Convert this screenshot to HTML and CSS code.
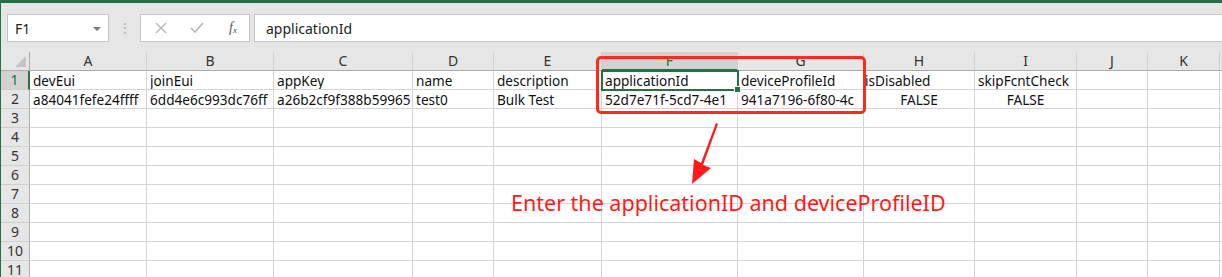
FILE: index.html
```html
<!DOCTYPE html>
<html lang="en">
<head>
    <meta charset="UTF-8">
    <title>Bulk import sheet</title>
    <link rel="stylesheet" href="styles.css">
</head>
<body>
    <div class="window">
        <div class="titlebar"></div>

        <!-- formula bar -->
        <div class="toolbar">
            <div class="namebox">
                <span>F1</span>
                <span class="caret"></span>
            </div>
            <div class="grip">&#8942;</div>
            <div class="fbuttons">
                <svg width="14" height="14" viewBox="0 0 14 14"><path d="M2 2 L12 12 M12 2 L2 12" stroke="#b5b5b5" stroke-width="1.4" fill="none"/></svg>
                <svg width="16" height="14" viewBox="0 0 16 14"><path d="M2 7 L6 11 L14 2" stroke="#b5b5b5" stroke-width="1.6" fill="none"/></svg>
                <span class="fx">f<sub>x</sub></span>
            </div>
            <div class="formula">applicationId</div>
        </div>

        <!-- sheet -->
        <div class="sheet">
            <div class="grid">
                <div class="corner"><span class="tri"></span></div>
                <div class="colhead">A</div>
                <div class="colhead">B</div>
                <div class="colhead">C</div>
                <div class="colhead">D</div>
                <div class="colhead">E</div>
                <div class="colhead sel">F</div>
                <div class="colhead">G</div>
                <div class="colhead">H</div>
                <div class="colhead">I</div>
                <div class="colhead">J</div>
                <div class="colhead">K</div>
                <div class="colhead rest"></div>

                <div class="rowhead sel">1</div>
                <div class="cell">devEui</div>
                <div class="cell">joinEui</div>
                <div class="cell">appKey</div>
                <div class="cell">name</div>
                <div class="cell">description</div>
                <div class="cell active">applicationId<span class="handle"></span></div>
                <div class="cell">deviceProfileId</div>
                <div class="cell tight">isDisabled</div>
                <div class="cell">skipFcntCheck</div>
                <div class="cell"></div>
                <div class="cell"></div>
                <div class="cell rest"></div>

                <div class="rowhead">2</div>
                <div class="cell">a84041fefe24ffff</div>
                <div class="cell">6dd4e6c993dc76ff</div>
                <div class="cell">a26b2cf9f388b59965</div>
                <div class="cell">test0</div>
                <div class="cell">Bulk Test</div>
                <div class="cell">52d7e71f-5cd7-4e1</div>
                <div class="cell">941a7196-6f80-4c</div>
                <div class="cell center">FALSE</div>
                <div class="cell center">FALSE</div>
                <div class="cell"></div>
                <div class="cell"></div>
                <div class="cell rest"></div>
            </div>

            <!-- annotation on top of the sheet -->
            <div class="callout-box"></div>
            <svg class="callout-arrow" width="40" height="70" viewBox="0 0 40 70">
                <path d="M32 3 L17 44 L25 47 L6 63 L8 38 L15 42 L30 2 Z" fill="#ff1a1a"/>
            </svg>
            <div class="callout-text">Enter the applicationID and deviceProfileID</div>
        </div>
    </div>

    <script>
    // fill empty rows 3..11
    const grid = document.querySelector('.grid');
    for (let r = 3; r <= 11; r++) {
        let html = `<div class="rowhead">${r}</div>`;
        for (let c = 0; c < 11; c++) {
            html += '<div class="cell"></div>';
        }
        html += '<div class="cell rest"></div>';
        grid.insertAdjacentHTML('beforeend', html);
    }
    </script>
</body>
</html>
```

FILE: styles.css
```css
/* sheet window */
body {
    margin: 0;
    background-color: #fff;
    font-family: "Noto Sans", "Noto Sans CJK SC", sans-serif;
    overflow: hidden;
}

.window {
    width: 1222px;
    height: 277px;
    border-left: 1px solid #217346;
    box-sizing: border-box;
    overflow: hidden;
}

.titlebar {
    height: 3px;
    background-color: #217346;
}

.toolbar {
    height: 49px;
    background-color: #e6e6e6;
    display: flex;
    align-items: flex-start;
    padding: 11px 0 0 6px;
    box-sizing: border-box;
}

.namebox,
.fbuttons,
.formula {
    height: 28px;
    background-color: #fff;
    border: 1px solid #c6c6c6;
    box-sizing: border-box;
    display: flex;
    align-items: center;
}

.namebox {
    width: 102px;
    padding: 0 7px;
    justify-content: space-between;
    font-size: 14px;
    color: #222;
}

.caret {
    width: 0;
    height: 0;
    border-left: 4px solid transparent;
    border-right: 4px solid transparent;
    border-top: 4px solid #777;
    margin-top: 1px;
}

.grip {
    width: 31px;
    text-align: center;
    color: #b0b0b0;
    font-size: 14px;
    line-height: 28px;
}

.fbuttons {
    width: 110px;
    padding: 0 10px 0 13px;
    gap: 21px;
}

.fx {
    font-family: "Liberation Serif", serif;
    font-style: italic;
    font-size: 14px;
    color: #555;
    margin-left: 3px;
}

.fx sub {
    font-size: 9px;
    vertical-align: -1px;
}

.formula {
    flex: 1;
    margin-left: 4px;
    padding-left: 11px;
    font-size: 14px;
    color: #222;
    border-right: none;
}

/* grid */
.sheet {
    position: relative;
}

.grid {
    display: grid;
    grid-template-columns: 29px 117px 127px 139px 81px 108px 136px 126px 111px 102px 71px 72px 1fr;
    grid-auto-rows: 19px;
    font-size: 13.6px;
    color: #111;
}

.corner,
.colhead {
    background-color: #e6e6e6;
    border-bottom: 1px solid #ababab;
    box-sizing: border-box;
}

.corner {
    position: relative;
    border-right: 1px solid #ababab;
}

.tri {
    position: absolute;
    right: 3px;
    bottom: 3px;
    width: 0;
    height: 0;
    border-left: 11px solid transparent;
    border-bottom: 11px solid #c4c4c4;
}

.colhead {
    border-right: 1px solid #d0d0d0;
    text-align: center;
    line-height: 18px;
    font-size: 14px;
    color: #333;
}

.colhead.sel {
    background-color: #d2d2d2;
    color: #217346;
    border-bottom: 2px solid #217346;
}

.colhead.rest {
    border-right: none;
}

.rowhead {
    background-color: #e6e6e6;
    border-right: 1px solid #ababab;
    border-bottom: 1px solid #d0d0d0;
    box-sizing: border-box;
    text-align: center;
    line-height: 18px;
    font-size: 14px;
    color: #333;
}

.rowhead.sel {
    background-color: #d2d2d2;
    color: #217346;
    border-right: 2px solid #217346;
}

.cell {
    border-right: 1px solid #d4d4d4;
    border-bottom: 1px solid #d4d4d4;
    box-sizing: border-box;
    padding-left: 3px;
    line-height: 19px;
    white-space: nowrap;
    overflow: hidden;
}

.cell.tight {
    padding-left: 1px;
}

.cell.center {
    text-align: center;
    padding-left: 0;
}

.cell.active {
    position: relative;
    overflow: visible;
    outline: 2px solid #217346;
    outline-offset: -1px;
    z-index: 1;
}

.handle {
    position: absolute;
    right: -4px;
    bottom: -4px;
    width: 5px;
    height: 5px;
    background-color: #217346;
    border: 1px solid #fff;
}

.cell.rest {
    border-right: none;
}

/* annotation */
.callout-box {
    position: absolute;
    left: 595px;
    top: 4px;
    width: 270px;
    height: 58px;
    border: 3px solid #ff2a1a;
    border-radius: 5px;
    box-sizing: border-box;
    z-index: 2;
}

.callout-arrow {
    position: absolute;
    left: 685px;
    top: 69px;
    z-index: 2;
}

.callout-text {
    position: absolute;
    left: 510px;
    top: 136px;
    font-size: 21.5px;
    color: #ff1a1a;
    white-space: nowrap;
    z-index: 2;
}
```
